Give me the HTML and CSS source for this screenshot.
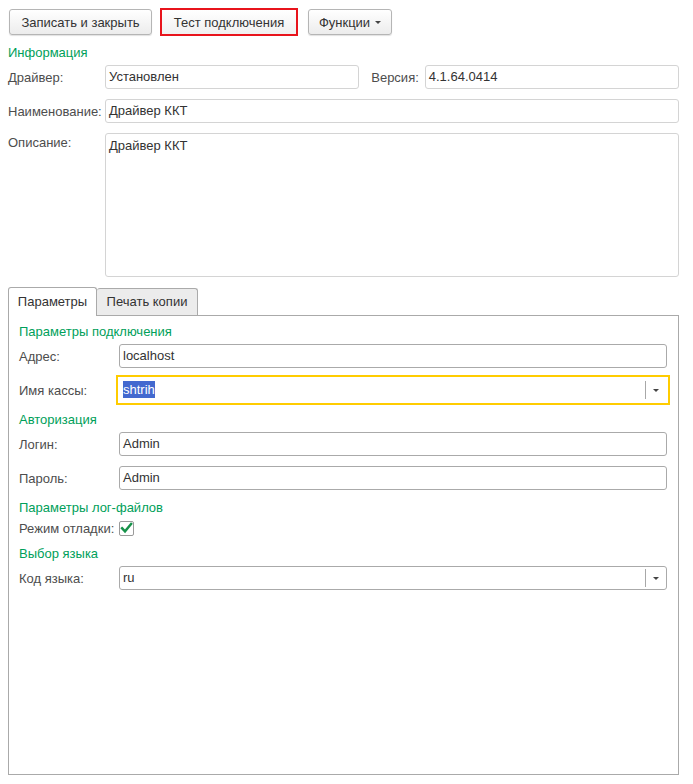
FILE: index.html
```html
<!DOCTYPE html>
<html lang="ru">
<head>
<meta charset="utf-8">
<title>Драйвер ККТ</title>
<link rel="stylesheet" href="styles.css">
</head>
<body>
<div class="form">
  <div class="toolbar">
    <button class="btn btn-save">Записать и закрыть</button>
    <button class="btn btn-test">Тест подключения</button>
    <button class="btn btn-func">Функции <span class="caret"></span></button>
  </div>

  <div class="group-title">Информация</div>
  <div class="row">
    <label class="lbl">Драйвер:</label>
    <div class="field ro grow">Установлен</div>
    <label class="lbl-inline">Версия:</label>
    <div class="field ro grow">4.1.64.0414</div>
  </div>
  <div class="row">
    <label class="lbl">Наименование:</label>
    <div class="field ro grow">Драйвер ККТ</div>
  </div>
  <div class="row row-top">
    <label class="lbl lbl-top">Описание:</label>
    <div class="field ro grow textarea">Драйвер ККТ</div>
  </div>

  <div class="tabs">
    <div class="tab active">Параметры</div>
    <div class="tab">Печать копии</div>
  </div>
  <div class="panel">
    <div class="group-title">Параметры подключения</div>
    <div class="row">
      <label class="lbl lbl-p">Адрес:</label>
      <div class="field grow">localhost</div>
    </div>
    <div class="row">
      <label class="lbl lbl-p">Имя кассы:</label>
      <div class="field grow combo focus">
        <span class="val"><span class="sel">shtrih</span></span>
        <span class="drop"><span class="tri"></span></span>
      </div>
    </div>

    <div class="group-title">Авторизация</div>
    <div class="row">
      <label class="lbl lbl-p">Логин:</label>
      <div class="field grow">Admin</div>
    </div>
    <div class="row">
      <label class="lbl lbl-p">Пароль:</label>
      <div class="field grow">Admin</div>
    </div>

    <div class="group-title">Параметры лог-файлов</div>
    <div class="row row-check">
      <label class="lbl-check">Режим отладки:</label>
      <span class="checkbox">
        <svg width="14" height="14" viewBox="0 0 14 14"><path d="M2.2 7.2 L5.4 10.6 L12 2.6" fill="none" stroke="#17924a" stroke-width="2.6" stroke-linecap="square" stroke-linejoin="miter"/></svg>
      </span>
    </div>

    <div class="group-title">Выбор языка</div>
    <div class="row">
      <label class="lbl lbl-p">Код языка:</label>
      <div class="field grow combo">
        <span class="val">ru</span>
        <span class="drop"><span class="tri"></span></span>
      </div>
    </div>
  </div>
</div>
</body>
</html>
```

FILE: styles.css
```css
* { box-sizing: border-box; }
html, body { margin: 0; padding: 0; background: #fff; }
body {
  font-family: "Liberation Sans", Arial, sans-serif;
  font-size: 13px;
  color: #4d4d4d;
}
.form {
  padding: 9px 14px 0 8px;
  width: 693px;
}
.toolbar {
  display: flex;
  align-items: center;
  height: 26px;
}
.btn {
  font-family: inherit;
  font-size: 13px;
  color: #333;
  height: 26px;
  padding: 0;
  border: 1px solid #b5b5b5;
  border-radius: 3px;
  background: linear-gradient(#ffffff, #ececec);
  box-shadow: 0 1px 1px rgba(0,0,0,0.12);
  display: flex;
  align-items: center;
  justify-content: center;
  white-space: nowrap;
  margin: 0;
}
.btn-save { margin-left: 1px; width: 143px; }
.btn-test {
  margin-left: 8px;
  width: 138px;
  height: 28px;
  border: 2px solid #e8141c;
  border-radius: 0;
  box-shadow: none;
  background: linear-gradient(#ffffff, #f0f0f0);
}
.btn-func { margin-left: 10px; width: 84px; }
.caret {
  display: inline-block;
  margin-left: 5px;
  width: 0; height: 0;
  border-left: 3px solid transparent;
  border-right: 3px solid transparent;
  border-top: 3px solid #444;
}
.group-title {
  color: #00a05a;
  height: 16px;
  line-height: 16px;
  margin-top: 10px;
  margin-bottom: 4px;
  white-space: nowrap;
}
.row {
  display: flex;
  align-items: center;
  height: 24px;
  margin-bottom: 10px;
}
.row-top { align-items: flex-start; height: 144px; }
.lbl {
  width: 97px;
  flex: none;
  white-space: nowrap;
}
.lbl-top { padding-top: 2px; }
.lbl-inline { margin: 0 6px 0 12px; flex: none; white-space: nowrap; }
.field {
  height: 24px;
  border: 1px solid #aaaaaa;
  border-radius: 3px;
  padding: 0 3px;
  line-height: 22px;
  color: #333;
  background: #fff;
  white-space: nowrap;
}
.field.ro { border-color: #d4d4d4; }
.grow { flex: 1; min-width: 0; }
.textarea { height: 144px; padding-top: 4px; line-height: 16px; }

.tabs {
  display: flex;
  align-items: flex-end;
  height: 28px;
}
.tab {
  height: 27px;
  line-height: 26px;
  border: 1px solid #aaaaaa;
  border-bottom: none;
  border-radius: 3px 3px 0 0;
  background: #ececec;
  color: #333;
  padding: 0;
  width: 101px;
  text-align: center;
  white-space: nowrap;
}
.tab.active {
  height: 29px;
  margin-bottom: -1px;
  background: #fff;
  width: 89px;
  position: relative;
  z-index: 1;
  line-height: 28px;
}
.tab + .tab { border-left: none; }
.panel {
  border: 1px solid #aaaaaa;
  height: 460px;
  padding: 8px 11px 0 10px;
}
.panel .group-title:first-child { margin-top: 0; }
.lbl-p { width: 100px; }

.combo {
  display: flex;
  align-items: center;
  padding-right: 0;
}
.combo .val { flex: 1; }
.drop {
  width: 21px;
  height: 18px;
  border-left: 1px solid #a8a8a8;
  display: flex;
  align-items: center;
  justify-content: center;
}
.tri {
  width: 0; height: 0;
  border-left: 3px solid transparent;
  border-right: 3px solid transparent;
  border-top: 3px solid #444;
}
.focus {
  border-color: #fff;
  border-radius: 0;
  box-shadow: 0 0 0 1px #fff, 0 0 0 3px #ffcc00;
}
.sel {
  background: #4369cf;
  color: #fff;
  padding: 1px 0;
}
.row-check { height: 16px; }
.lbl-check { flex: none; margin-right: 5px; white-space: nowrap; }
.checkbox {
  width: 15px;
  height: 15px;
  border: 1px solid #9a9a9a;
  border-radius: 2px;
  background: #fff;
  display: flex;
  align-items: center;
  justify-content: center;
}
```
